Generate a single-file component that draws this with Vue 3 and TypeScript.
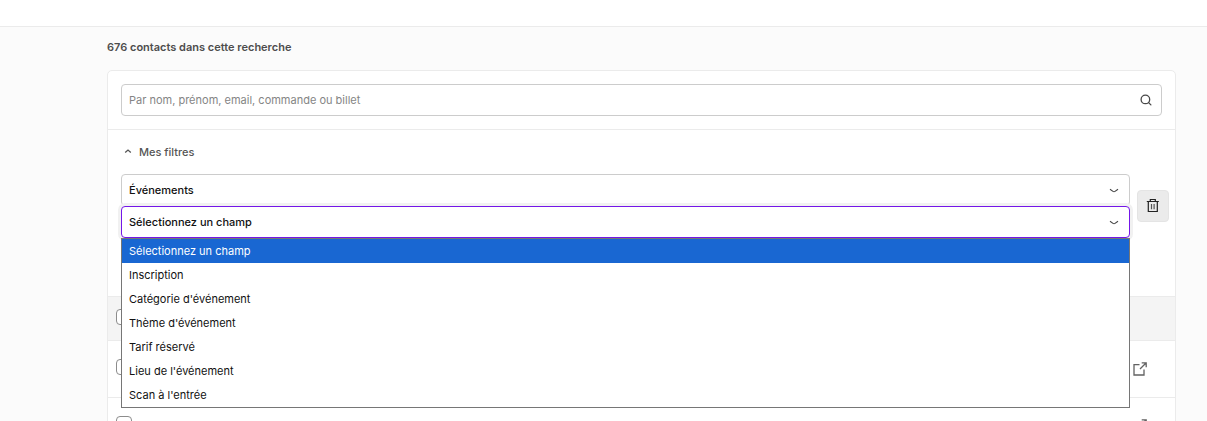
<script setup lang="ts">
import { ref } from 'vue'

const query = ref('')
const category = ref('Événements')
const fields: string[] = [
  'Sélectionnez un champ',
  'Inscription',
  "Catégorie d'événement",
  "Thème d'événement",
  'Tarif réservé',
  "Lieu de l'événement",
  "Scan à l'entrée",
]
const field = ref(fields[0])
const filtersOpen = ref(true)
const listOpen = ref(true)
const contacts: number[] = [1, 2]

function choose(name: string) {
  field.value = name
  listOpen.value = false
}
</script>

<template>
  <div class="page">
    <header class="topbar"></header>
    <main class="content">
      <h1 class="count">676 contacts dans cette recherche</h1>
      <section class="card">
        <div class="search-area">
          <div class="search">
            <input v-model="query" class="search-input" type="text" aria-label="Recherche" placeholder="Par nom, prénom, email, commande ou billet" />
            <button class="search-button" type="button" aria-label="Rechercher">
              <svg width="14" height="14" viewBox="0 0 14 14" fill="none" stroke="#484848" stroke-width="1.3">
                <circle cx="6.4" cy="6.4" r="4.3" />
                <path d="M9.6 9.6 11.9 11.9" stroke-linecap="round" />
              </svg>
            </button>
          </div>
        </div>
        <div class="filters">
          <button class="toggle" type="button" :aria-expanded="filtersOpen" @click="filtersOpen = !filtersOpen">
            <svg width="8" height="8" viewBox="0 0 8 8" fill="none" stroke="#555" stroke-width="1.3">
              <path d="M1.2 4.4 4 2 6.8 4.4" />
            </svg>
            <span>Mes filtres</span>
          </button>
          <div v-if="filtersOpen" class="filter-row">
            <div class="selects">
              <div class="select-wrap">
                <select v-model="category" class="select" aria-label="Catégorie">
                  <option>Événements</option>
                </select>
                <svg class="chevron" width="10" height="6" viewBox="0 0 10 6" fill="none" stroke="#444" stroke-width="1.1">
                  <path d="M1 1.2 4 3.4Q5 4.1 6 3.4L9 1.2" />
                </svg>
              </div>
              <div class="select-wrap">
                <select v-model="field" class="select focused" aria-label="Champ">
                  <option v-for="name in fields" :key="name">{{ name }}</option>
                </select>
                <svg class="chevron" width="10" height="6" viewBox="0 0 10 6" fill="none" stroke="#444" stroke-width="1.1">
                  <path d="M1 1.2 4 3.4Q5 4.1 6 3.4L9 1.2" />
                </svg>
                <ul v-if="listOpen" class="options" role="listbox" aria-label="Champ">
                  <li
                    v-for="name in fields"
                    :key="name"
                    class="option"
                    :class="{ selected: name === field }"
                    role="option"
                    :aria-selected="name === field"
                    @click="choose(name)"
                  >{{ name }}</li>
                </ul>
              </div>
            </div>
            <button class="delete" type="button" aria-label="Supprimer le filtre">
              <svg width="14" height="16" viewBox="0 0 14 16" fill="none" stroke="#222" stroke-width="1.2">
                <path d="M.8 3.5H12.8M4.3 3.3V1.5H9.3V3.3M2.3 3.5V13.5H11.3V3.5" />
                <path d="M5.5 6V11.3M8.1 6V11.3" stroke="#555" />
              </svg>
            </button>
          </div>
        </div>
        <table class="contacts">
          <thead>
            <tr>
              <th class="check-cell"><input class="check" type="checkbox" aria-label="Tout sélectionner" /></th>
              <th></th>
            </tr>
          </thead>
          <tbody>
            <tr v-for="id in contacts" :key="id">
              <td class="check-cell"><input class="check" type="checkbox" aria-label="Sélectionner le contact" /></td>
              <td class="link-cell">
                <a class="open" href="#" aria-label="Ouvrir le contact">
                  <svg width="14" height="14" viewBox="0 0 14 14" fill="none" stroke="#626262" stroke-width="1.3">
                    <path d="M6.5 2.7H1V13H11V7.5M7 7 13 1M8.7 .8H13.2V5.3" />
                  </svg>
                </a>
              </td>
            </tr>
          </tbody>
        </table>
      </section>
    </main>
  </div>
</template>

<style>
body {
  margin: 0;
  background: #fafafa;
}
</style>

<style scoped>
.page,
.page * {
  box-sizing: border-box;
}
.page {
  height: 100vh;
  overflow: hidden;
  background: #fbfbfb;
  color: #111;
  font-family: Inter, "Liberation Sans", sans-serif;
  font-size: 11px;
}
.topbar {
  height: 27px;
  background: #fff;
  border-bottom: 1px solid #ebebeb;
}
.content {
  padding: 12px 31px 0 107px;
}
.count {
  margin: 0 0 15px;
  color: #4d4d4d;
  font-size: 11px;
  font-weight: 600;
  line-height: 16px;
}
.card {
  background: #fff;
  border: 1px solid #ebebeb;
  border-radius: 5px;
}
.search-area {
  padding: 13px;
  border-bottom: 1px solid #ebebeb;
}
.search {
  display: flex;
  height: 32px;
  background: #fff;
  border: 1px solid #ccc;
  border-radius: 4px;
}
.search-input {
  flex: 1;
  min-width: 0;
  padding: 0 7px;
  background: none;
  border: 0;
  outline: 0;
  color: #111;
  font: inherit;
}
.search-input::placeholder {
  color: #858585;
  opacity: 1;
}
button {
  display: flex;
  align-items: center;
  justify-content: center;
  padding: 0;
  background: none;
  border: 0;
  font: inherit;
  cursor: pointer;
}
.search-button {
  width: 30px;
}
.filters {
  height: 166px;
  padding: 14px 6px 0 13px;
}
.toggle {
  gap: 7px;
  padding: 0 3px;
  color: #555;
  font-weight: 500;
  line-height: 16px;
}
.filter-row {
  display: flex;
  align-items: center;
  gap: 7px;
  margin-top: 14px;
}
.selects {
  flex: 1;
}
.select-wrap {
  position: relative;
}
.select {
  display: block;
  width: 100%;
  height: 32px;
  padding: 0 30px 0 7px;
  appearance: none;
  background: #fff;
  border: 1px solid #ccc;
  border-radius: 4px;
  outline: 0;
  color: #111;
  font: inherit;
  font-weight: 500;
}
.focused {
  position: relative;
  border-color: #7416e8;
  box-shadow: 0 0 0 3px #f1f1f1;
}
.chevron {
  position: absolute;
  top: 14px;
  right: 11px;
  pointer-events: none;
}
.options {
  position: absolute;
  z-index: 2;
  top: 100%;
  left: 0;
  right: 0;
  margin: 0;
  padding: 0;
  list-style: none;
  background: #fff;
  border: 1px solid #767676;
}
.option {
  padding: 0 7px;
  line-height: 24px;
}
.option.selected {
  background: #1967d2;
  color: #fff;
}
.delete {
  width: 32px;
  height: 32px;
  background: #ebebeb;
  border: 1px solid #e4e4e4;
  border-radius: 4px;
}
.contacts {
  width: 100%;
  border-collapse: separate;
  border-spacing: 0;
}
th,
td {
  padding: 0 28px 0 8px;
  border-bottom: 1px solid #ebebeb;
}
th {
  height: 45px;
  background: #f4f4f4;
  border-top: 1px solid #ebebeb;
}
td {
  height: 57px;
}
.check-cell {
  width: 52px;
  text-align: left;
}
.check {
  display: block;
  width: 16px;
  height: 16px;
  margin: 0 0 3px;
  appearance: none;
  background: #fff;
  border: 1px solid #8c8c8c;
  border-radius: 4px;
}
td .check {
  margin-bottom: 5px;
}
.open {
  display: block;
  width: 14px;
  height: 14px;
  margin-left: auto;
}
.open svg {
  display: block;
}
</style>
